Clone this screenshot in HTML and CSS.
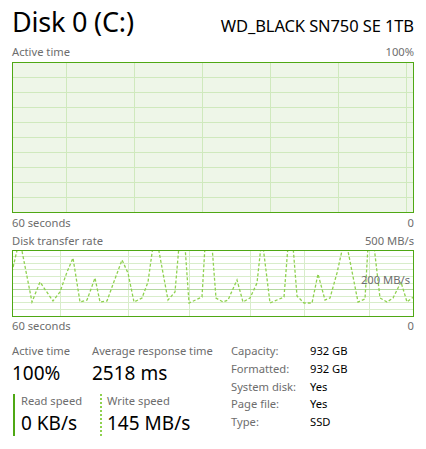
FILE: index.html
```html
<!DOCTYPE html>
<html>
<head>
<meta charset="utf-8">
<link rel="stylesheet" href="styles.css">
</head>
<body>
<div class="page">
  <div class="header">
    <div class="title">Disk 0 (C:)</div>
    <div class="model">WD_BLACK SN750 SE 1TB</div>
  </div>

  <div class="axis axis-top"><span>Active time</span><span>100%</span></div>
  <svg class="chart chart1" width="402" height="151" viewBox="12 62 402 151">
    <rect x="12" y="62" width="402" height="151" fill="#eef6e8"/>
    <g stroke="#cfe9bd" stroke-width="1">
      <line x1="12" x2="414" y1="77.5" y2="77.5"/>
      <line x1="12" x2="414" y1="92.5" y2="92.5"/>
      <line x1="12" x2="414" y1="107.5" y2="107.5"/>
      <line x1="12" x2="414" y1="122.5" y2="122.5"/>
      <line x1="12" x2="414" y1="137.5" y2="137.5"/>
      <line x1="12" x2="414" y1="152.5" y2="152.5"/>
      <line x1="12" x2="414" y1="167.5" y2="167.5"/>
      <line x1="12" x2="414" y1="182.5" y2="182.5"/>
      <line x1="12" x2="414" y1="197.5" y2="197.5"/>
      <line y1="62" y2="213" x1="66.5" x2="66.5"/>
      <line y1="62" y2="213" x1="134.5" x2="134.5"/>
      <line y1="62" y2="213" x1="202.5" x2="202.5"/>
      <line y1="62" y2="213" x1="270.5" x2="270.5"/>
      <line y1="62" y2="213" x1="338.5" x2="338.5"/>
      <line y1="62" y2="213" x1="406.5" x2="406.5"/>
    </g>
    <rect x="12.5" y="62.5" width="401" height="150" fill="none" stroke="#4fa814" stroke-width="1"/>
  </svg>
  <div class="axis axis-bottom"><span>60 seconds</span><span>0</span></div>

  <div class="axis axis-top2"><span>Disk transfer rate</span><span>500 MB/s</span></div>
  <div class="chart2-wrap">
    <svg class="chart chart2" width="402" height="67" viewBox="12 250 402 67">
      <defs>
        <clipPath id="c2"><rect x="12" y="250" width="402" height="67"/></clipPath>
      </defs>
      <rect x="12" y="250" width="402" height="67" fill="#ffffff"/>
      <g stroke="#d8edca" stroke-width="1">
        <line x1="12" x2="414" y1="256.5" y2="256.5"/>
        <line x1="12" x2="414" y1="263.5" y2="263.5"/>
        <line x1="12" x2="414" y1="269.5" y2="269.5"/>
        <line x1="12" x2="414" y1="276.5" y2="276.5"/>
        <line x1="12" x2="414" y1="283.5" y2="283.5"/>
        <line x1="12" x2="414" y1="296.5" y2="296.5"/>
        <line x1="12" x2="414" y1="302.5" y2="302.5"/>
        <line x1="12" x2="414" y1="309.5" y2="309.5"/>
        <line y1="250" y2="317" x1="60.5" x2="60.5"/>
        <line y1="250" y2="317" x1="128.5" x2="128.5"/>
        <line y1="250" y2="317" x1="189.5" x2="189.5"/>
        <line y1="250" y2="317" x1="250.5" x2="250.5"/>
        <line y1="250" y2="317" x1="304.5" x2="304.5"/>
        <line y1="250" y2="317" x1="369.5" x2="369.5"/>
      </g>
      <line x1="12" x2="414" y1="289.5" y2="289.5" stroke="#b4d8a0" stroke-width="1"/>
      <polyline clip-path="url(#c2)" fill="none" stroke="#8fd14f" stroke-width="1.3" stroke-dasharray="3 2"
        points="12,272 18,246 21,246 32,302 40,282 53,301 60,292 67,272 73,258 80,302 87,300 95,278 100,302 107,301 112,287 122,260 128,273 134,302 142,298 148,282 153,246 158,246 168,300 175,292 179,246 185,246 189,303 202,297 205,246 212,246 216,298 223,302 228,300 237,280 243,302 250,298 257,283 261,246 263,246 270,303 284,297 288,246 293,246 297,296 304,303 312,303 318,274 325,300 330,298 337,273 343,246 347,246 358,302 365,299 368,246 374,246 380,298 387,302 393,298 401,282 407,302 412,298 414,297"/>
      <rect x="12.5" y="250.5" width="401" height="66" fill="none" stroke="#4fa814" stroke-width="1"/>
    </svg>
    <span class="scale-label">200 MB/s</span>
  </div>
  <div class="axis axis-bottom2"><span>60 seconds</span><span>0</span></div>

  <div class="details">
    <div class="stats">
      <div class="stat-row">
        <div class="stat stat-active">
          <div class="stat-label">Active time</div>
          <div class="stat-value">100%</div>
        </div>
        <div class="stat">
          <div class="stat-label">Average response time</div>
          <div class="stat-value">2518 ms</div>
        </div>
      </div>
      <div class="stat-row speed-row">
        <div class="speed speed-read">
          <div class="stat-label">Read speed</div>
          <div class="stat-value">0 KB/s</div>
        </div>
        <div class="speed speed-write">
          <div class="stat-label">Write speed</div>
          <div class="stat-value">145 MB/s</div>
        </div>
      </div>
    </div>
    <div class="info">
      <span class="info-label">Capacity:</span><span class="info-value">932 GB</span>
      <span class="info-label">Formatted:</span><span class="info-value">932 GB</span>
      <span class="info-label">System disk:</span><span class="info-value">Yes</span>
      <span class="info-label">Page file:</span><span class="info-value">Yes</span>
      <span class="info-label">Type:</span><span class="info-value">SSD</span>
    </div>
  </div>
</div>
</body>
</html>
```

FILE: styles.css
```css
* { box-sizing: border-box; }
html, body {
  margin: 0;
  padding: 0;
  background: #ffffff;
}
body {
  font-family: "Noto Sans", "Open Sans", sans-serif;
  color: #000;
  width: 426px;
  height: 449px;
  overflow: hidden;
}
.page {
  padding: 5px 12px 0 12px;
  width: 426px;
}
.header {
  display: flex;
  justify-content: space-between;
  align-items: baseline;
  height: 38px;
}
.title {
  font-size: 27px;
  line-height: 34px;
  letter-spacing: -0.2px;
}
.model {
  font-size: 16.5px;
  line-height: 20px;
  letter-spacing: -0.1px;
}
.axis {
  display: flex;
  justify-content: space-between;
  font-size: 11.2px;
  line-height: 16px;
  height: 16px;
  color: #6d6d6d;
  width: 402px;
}
.axis-top { margin-top: 1px; margin-bottom: 2px; }
.chart { display: block; }
.axis-bottom { margin-top: 2px; }
.axis-top2 { margin-top: 2px; margin-bottom: 1px; }
.axis-bottom2 { margin-top: 1px; }
.chart2-wrap {
  position: relative;
  width: 402px;
  height: 67px;
}
.scale-label {
  position: absolute;
  right: 4px;
  top: 22px;
  font-size: 11.2px;
  line-height: 16px;
  color: #6d6d6d;
}
.details {
  display: flex;
  margin-top: 9px;
}
.stats {
  width: 218px;
  display: flex;
  flex-direction: column;
}
.stat-row {
  display: flex;
}
.stat-active { width: 80px; }
.stat-label {
  font-size: 11.2px;
  line-height: 16px;
  color: #6d6d6d;
  white-space: nowrap;
}
.stat-value {
  font-size: 19px;
  line-height: 24px;
  margin-top: 2px;
  white-space: nowrap;
}
.speed-row { margin-top: 9px; }
.speed {
  height: 42px;
}
.speed .stat-label { line-height: 14px; }
.speed .stat-value { margin-top: 3px; }
.speed-read {
  width: 87px;
  margin-left: 1px;
  padding-left: 6px;
  border-left: 2px solid #4fa814;
}
.speed-write {
  padding-left: 5px;
  border-left: 2px dotted #8fd14f;
}
.info {
  display: grid;
  grid-template-columns: 79px auto;
  align-content: start;
  font-size: 11.2px;
  line-height: 17.75px;
  margin-top: -1px;
  padding-left: 1px;
}
.info-label { color: #6d6d6d; }
.info-value { color: #000; }
```
